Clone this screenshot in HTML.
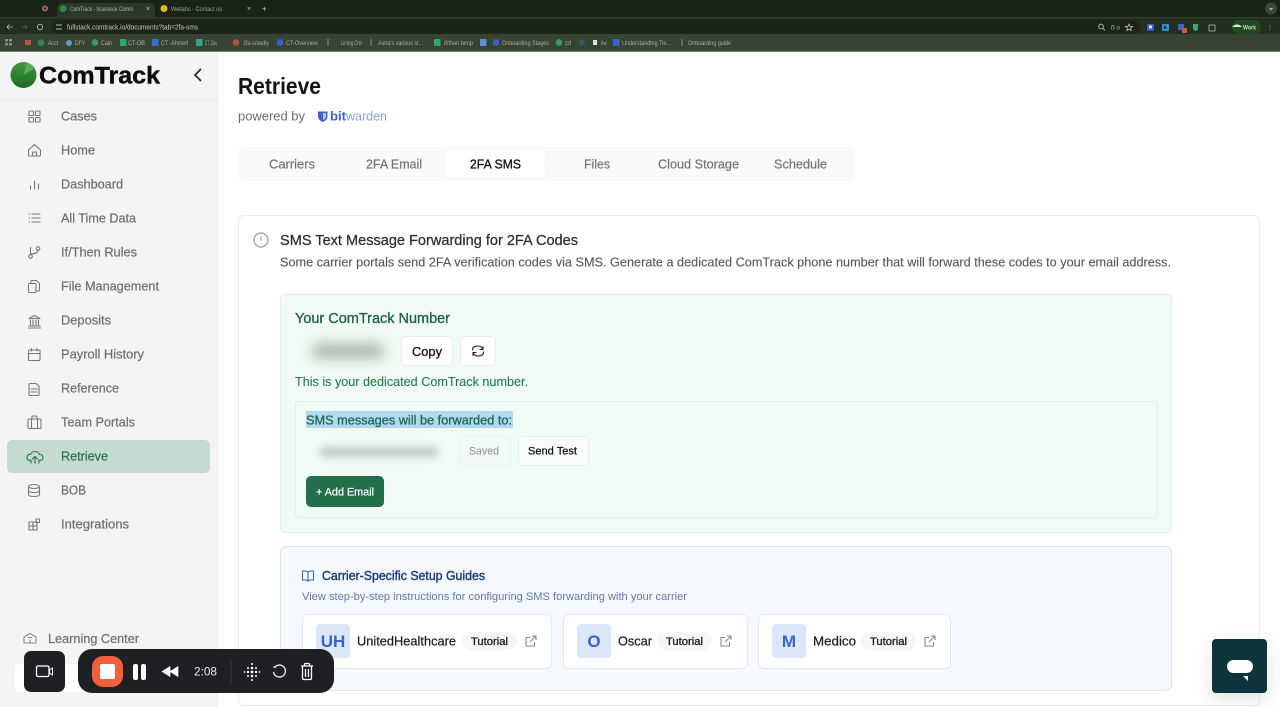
<!DOCTYPE html>
<html lang="en"><head><meta charset="utf-8"><title>ComTrack - Retrieve</title>
<style>
html,body{margin:0;padding:0;width:1280px;height:707px;overflow:hidden;background:#fff;font-family:"Liberation Sans",sans-serif}
.b{position:absolute;box-sizing:border-box}
svg.o{position:absolute;left:0;top:0;width:1280px;height:707px;z-index:1}
svg.soft{filter:blur(.3px)}
svg text{font-family:"Liberation Sans",sans-serif}
.btn{background:#fff;border:1px solid #e8edea;border-radius:5px}
.card{background:#fff;border:1px solid #dfe8f3;border-radius:6px;top:614px;height:55px}
.av{background:#dbe7f9;border-radius:4px;top:624px;width:34px;height:34px}
.pill{background:#f6f6f6;border-radius:9px;top:632px;width:55px;height:18px}
</style></head><body>
<!-- browser chrome -->
<div class="b" style="left:0;top:0;width:1280px;height:17px;background:#192416"></div>
<div class="b" style="left:57px;top:3px;width:98px;height:15px;background:#2b3a27;border-radius:5px 5px 0 0"></div>
<div class="b" style="left:0;top:17px;width:1280px;height:18px;background:#222e1e;border-top:1px solid #33422e"></div>
<div class="b" style="left:52px;top:20px;width:1088px;height:14px;background:#1a2417;border-radius:7px"></div>
<div class="b" style="left:0;top:34px;width:1280px;height:17px;background:#374433"></div>
<div class="b" style="left:0;top:51px;width:1280px;height:1px;background:#777d75"></div>
<div class="b" style="left:1232px;top:20px;width:29px;height:14px;background:#1f4a24;border-radius:7px"></div>
<!-- sidebar -->
<div class="b" style="left:0;top:52px;width:218px;height:655px;background:#f4f4f5;border-right:1px solid #e9e9e9"></div>
<div class="b" style="left:0;top:99px;width:217px;height:1px;background:#ebebeb"></div>
<div class="b" style="left:7px;top:440px;width:203px;height:33px;background:#c5dad0;border-radius:5px"></div>
<div class="b" style="left:15px;top:664px;width:120px;height:28px;background:#fff;border-radius:4px"></div>
<!-- tabs -->
<div class="b" style="left:238px;top:147px;width:617px;height:34px;background:#fafafa;border-radius:5px"></div>
<div class="b" style="left:445px;top:150px;width:100px;height:28px;background:#fff;border-radius:4px;box-shadow:0 1px 2px rgba(0,0,0,.04)"></div>
<!-- card -->
<div class="b" style="left:238px;top:215px;width:1022px;height:491px;border:1px solid #ececec;border-radius:6px"></div>
<div class="b" style="left:280px;top:294px;width:892px;height:239px;background:#effbf4;border:1px solid #d9f2e4;border-radius:5px"></div>
<div class="b" style="left:312px;top:345px;width:72px;height:12px;background:#98a69d;filter:blur(7px);border-radius:6px"></div>
<div class="b btn" style="left:401px;top:336px;width:52px;height:30px"></div>
<div class="b btn" style="left:460px;top:336px;width:36px;height:30px"></div>
<div class="b" style="left:295px;top:401px;width:863px;height:117px;border:1px solid #d9f2e4;border-radius:4px"></div>
<div class="b" style="left:306px;top:411px;width:207px;height:17px;background:#b2d8f2"></div>
<div class="b" style="left:319px;top:447px;width:120px;height:10px;background:#c2cac5;filter:blur(4px);border-radius:5px"></div>
<div class="b" style="left:459px;top:436px;width:52px;height:30px;background:#f1f9f4;border:1px solid #e8f0eb;border-radius:5px"></div>
<div class="b btn" style="left:518px;top:436px;width:71px;height:30px;background:#f8fcfa"></div>
<div class="b" style="left:306px;top:476px;width:78px;height:31px;background:#22704a;border-radius:5px"></div>
<!-- guides -->
<div class="b" style="left:280px;top:546px;width:892px;height:145px;background:#f5f9fe;border:1px solid #dbe5f1;border-radius:6px"></div>
<div class="b card" style="left:302px;width:250px"></div>
<div class="b card" style="left:563px;width:185px"></div>
<div class="b card" style="left:758px;width:193px"></div>
<div class="b av" style="left:316px"></div><div class="b av" style="left:577px"></div><div class="b av" style="left:772px"></div>
<div class="b pill" style="left:462px"></div><div class="b pill" style="left:657px"></div><div class="b pill" style="left:861px"></div>

<svg class="o soft" viewBox="0 0 1280 707" xmlns="http://www.w3.org/2000/svg">
<defs><linearGradient id="g" x1="0" y1="0" x2="0" y2="1"><stop offset="0" stop-color="#3f9a3f"/><stop offset="1" stop-color="#1c6b24"/></linearGradient></defs>
<!-- chrome content -->
<g style="filter:blur(.35px)">
<circle cx="45" cy="8.500" r="3" fill="#a86b5f"/><circle cx="45" cy="8.500" r="1.300" fill="#3a2a25"/>
<circle cx="63" cy="8.500" r="3.500" fill="#2f8a4a"/>
<text x="70" y="11" font-size="6.500" fill="#aeb8a8" textLength="63" lengthAdjust="spacingAndGlyphs">ComTrack - Insurance Comm</text>
<text x="146" y="11" font-size="7" fill="#c4cbc0">×</text>
<circle cx="164" cy="8.500" r="3.500" fill="#e0b92c"/>
<text x="171" y="11" font-size="6.500" fill="#9aa595" textLength="51" lengthAdjust="spacingAndGlyphs">Wellabs - Contact us</text>
<text x="247" y="11" font-size="7" fill="#c4cbc0">×</text>
<text x="262" y="11.500" font-size="8" fill="#c4cbc0">+</text>
<circle cx="1271" cy="8.500" r="6" fill="#3a4a38"/><path d="M1269.500 8l1.500 1.500 1.500-1.500" stroke="#ccd" fill="none"/>
<path d="M7 27h6M7 27l2.500-2.500M7 27l2.500 2.500" stroke="#b5bdb0" fill="none" stroke-width=".8"/>
<path d="M22 27h5M27 27l-2-2M27 27l-2 2" stroke="#5f6b5a" fill="none" stroke-width=".8"/>
<circle cx="40" cy="27" r="2.700" stroke="#b5bdb0" fill="none" stroke-width=".8"/>
<path d="M56 25h6M56 29h6" stroke="#b5bdb0" stroke-width=".9"/>
<text x="67" y="29.500" font-size="7" fill="#c3cbbd" textLength="131" lengthAdjust="spacingAndGlyphs">fullstack.comtrack.io/documents?tab=2fa-sms</text>
<circle cx="1101" cy="26.500" r="2.400" stroke="#a8b0a4" fill="none"/><path d="M1103 28.500l2 2" stroke="#a8b0a4"/>
<text x="1111" y="29.500" font-size="6.500" fill="#a8b0a4" textLength="9">ßo</text>
<path d="M1129 24l1 2.300 2.500.2-1.900 1.600.6 2.400-2.200-1.300-2.200 1.300.6-2.400-1.900-1.600 2.500-.2z" stroke="#c3cbbd" fill="none" stroke-width=".8"/>
<rect x="1147" y="24" width="7" height="7" rx="1" fill="#3a5fc0"/><rect x="1149" y="25.500" width="3" height="3" fill="#dde"/>
<rect x="1162" y="24" width="7" height="7" rx="1" fill="#2f8fd6"/><path d="M1164 25.500l3 2-3 2z" fill="#123"/>
<rect x="1178" y="24" width="6" height="6" rx="1" fill="#4068c8"/><rect x="1182" y="28" width="5" height="5" rx="1" fill="#d85a30"/>
<path d="M1193 24h5v4q0 2-2.500 3q-2.500-1-2.500-3z" fill="#3fa577"/>
<rect x="1209" y="25" width="6" height="6" stroke="#b5bdb0" fill="none" stroke-width=".8"/>
<path d="M1232 27q5-5 10 0z" fill="#dfe3dc"/>
<text x="1243" y="29.500" font-size="6" fill="#c5d4bf" font-weight="bold" textLength="13" lengthAdjust="spacingAndGlyphs">Work</text>
<path d="M1270 25v.6M1270 27v.6M1270 29v.6" stroke="#c3cbbd" stroke-width="1"/>
<g fill="#8a9486"><rect x="5" y="39" width="3" height="2.500"/><rect x="9" y="39" width="3" height="2.500"/><rect x="5" y="43" width="3" height="2.500"/><rect x="9" y="43" width="3" height="2.500"/></g>
<rect x="25" y="40" width="6" height="5" fill="#b8564a"/>
<circle cx="41" cy="42.500" r="3.300" fill="#2f8a4a"/><circle cx="69" cy="43" r="3" fill="#5b9bd0"/><circle cx="95" cy="42.500" r="3.300" fill="#3e9a5a"/>
<rect x="120" y="39" width="6.500" height="7" fill="#2fa866"/><rect x="152" y="39" width="6.500" height="7" fill="#3a6fd0"/><rect x="196" y="39" width="6.500" height="7" fill="#35a090"/>
<circle cx="236" cy="42.500" r="3.300" fill="#a5563f"/><circle cx="280" cy="42.500" r="3.300" fill="#3b62c8"/>
<path d="M328 39v7" stroke="#5e8a4a" stroke-width="1.500"/><path d="M371 39v7" stroke="#5e8a4a" stroke-width="1.500"/>
<rect x="434" y="39" width="6.500" height="7" fill="#2fa866"/><rect x="480" y="39" width="6.500" height="7" fill="#5b8fd8"/>
<circle cx="496" cy="42.500" r="3.300" fill="#3b62c8"/><circle cx="559" cy="42.500" r="3.300" fill="#3b9a58"/><circle cx="582" cy="42.500" r="3" fill="#33566e"/>
<rect x="593" y="40" width="4" height="5" fill="#dfe3dc"/><rect x="613" y="39" width="6.500" height="7" fill="#3b62c8"/>
<path d="M682 39v7" stroke="#5e8a4a" stroke-width="1.500"/>
<g font-size="6" fill="#a8b0a2">
<text x="48" y="45" textLength="10" lengthAdjust="spacingAndGlyphs">Acct</text>
<text x="75" y="45" textLength="10" lengthAdjust="spacingAndGlyphs">DFY</text>
<text x="101" y="45" textLength="11" lengthAdjust="spacingAndGlyphs">Caln</text>
<text x="128" y="45" textLength="17" lengthAdjust="spacingAndGlyphs">CT-OB</text>
<text x="161" y="45" textLength="27" lengthAdjust="spacingAndGlyphs">CT -Ahmed</text>
<text x="205" y="45" textLength="12" lengthAdjust="spacingAndGlyphs">CT .Zaru</text>
<text x="243" y="45" textLength="26" lengthAdjust="spacingAndGlyphs">2fa-smedly</text>
<text x="286" y="45" textLength="32" lengthAdjust="spacingAndGlyphs">CT-Overview</text>
<text x="341" y="45" textLength="21" lengthAdjust="spacingAndGlyphs">Liming Cntr</text>
<text x="378" y="45" textLength="45" lengthAdjust="spacingAndGlyphs">Astra's various st...</text>
<text x="444" y="45" textLength="29" lengthAdjust="spacingAndGlyphs">if/then temp</text>
<text x="502" y="45" textLength="47" lengthAdjust="spacingAndGlyphs">Onboarding Stages</text>
<text x="565" y="45" textLength="6" lengthAdjust="spacingAndGlyphs">zd</text>
<text x="601" y="45" textLength="6" lengthAdjust="spacingAndGlyphs">iv</text>
<text x="622" y="45" textLength="49" lengthAdjust="spacingAndGlyphs">Understanding Tie...</text>
<text x="688" y="45" textLength="43" lengthAdjust="spacingAndGlyphs">Onboarding guide</text>
</g></g>
<!-- logo -->
<circle cx="23.500" cy="75" r="13" fill="url(#g)"/><path d="M23.500 75L35 68A13 13 0 0 0 27 62.500z" fill="#6fb36a" opacity=".7"/>
<text x="39" y="83.500" font-size="24" font-weight="bold" fill="#0c0c0c" stroke="#0c0c0c" stroke-width=".4" textLength="121" lengthAdjust="spacingAndGlyphs">ComTrack</text>
<path d="M201 69l-6 6 6 6" stroke="#222" stroke-width="1.600" fill="none"/>
<!-- nav text -->
<g font-size="13" fill="#6f6f6f" stroke="#6f6f6f" stroke-width=".22">
<text x="61" y="120.500" textLength="36" lengthAdjust="spacingAndGlyphs">Cases</text>
<text x="61" y="154.500" textLength="34" lengthAdjust="spacingAndGlyphs">Home</text>
<text x="61" y="188.500" textLength="62" lengthAdjust="spacingAndGlyphs">Dashboard</text>
<text x="61" y="222.500" textLength="75" lengthAdjust="spacingAndGlyphs">All Time Data</text>
<text x="61" y="256.500" textLength="76" lengthAdjust="spacingAndGlyphs">If/Then Rules</text>
<text x="61" y="290.500" textLength="98" lengthAdjust="spacingAndGlyphs">File Management</text>
<text x="61" y="324.500" textLength="50" lengthAdjust="spacingAndGlyphs">Deposits</text>
<text x="61" y="358.500" textLength="83" lengthAdjust="spacingAndGlyphs">Payroll History</text>
<text x="61" y="392.500" textLength="58" lengthAdjust="spacingAndGlyphs">Reference</text>
<text x="61" y="426.500" textLength="74" lengthAdjust="spacingAndGlyphs">Team Portals</text>
<text x="61" y="460.500" textLength="47" lengthAdjust="spacingAndGlyphs" fill="#2a7050" stroke="#2a7050">Retrieve</text>
<text x="61" y="494.500" textLength="25" lengthAdjust="spacingAndGlyphs">BOB</text>
<text x="61" y="528.500" textLength="68" lengthAdjust="spacingAndGlyphs">Integrations</text>
<text x="48" y="643" textLength="91" lengthAdjust="spacingAndGlyphs">Learning Center</text>
</g>
<!-- nav icons -->
<g stroke="#777" stroke-width="1.100" fill="none" stroke-linecap="round" stroke-linejoin="round">
<rect x="29" y="111" width="4.500" height="4.500" rx=".8"/><rect x="35.500" y="111" width="4.500" height="4.500" rx=".8"/><rect x="29" y="117.500" width="4.500" height="4.500" rx=".8"/><rect x="35.500" y="117.500" width="4.500" height="4.500" rx=".8"/>
<path d="M28.500 150l6-5.500 6 5.500v5q0 1-1 1h-10q-1 0-1-1z"/><path d="M32.500 156v-4h4v4"/>
<path d="M30.500 189v-3M34.500 189v-8M38.500 189v-5"/>
<path d="M32 214h8M32 218h8M32 222h8M29 214h.5M29 218h.5M29 222h.5"/>
<circle cx="30.500" cy="256.500" r="1.800"/><circle cx="38" cy="248.500" r="1.800"/><path d="M30.500 254.500v-7M30.500 254q7 0 7.500-4"/>
<rect x="28.500" y="283.500" width="7.500" height="9" rx="1.200"/><path d="M31 283v-1.500q0-1 1-1h4.500l3 3v6.500q0 1-1 1h-2"/>
<path d="M29 318.500l5.500-3 5.500 3zM30.500 320v5M33 320v5M36 320v5M38.500 320v5M29 326h11M28.500 328h12"/>
<rect x="28.500" y="350" width="11.500" height="10.500" rx="1"/><path d="M28.500 353.500h11.500M31.500 348.500v2.500M37 348.500v2.500"/>
<path d="M30 383.500h6l3 3v8q0 1-1 1h-8q-1 0-1-1v-10q0-1 1-1zM31 389h6M31 392h6"/>
<rect x="28" y="419" width="13" height="9.500" rx="1"/><path d="M31.500 428.500v-9.500M37.500 428.500v-9.500M32 419v-2q0-1 1-1h3q1 0 1 1v2"/>
<g stroke="#2a7050"><path d="M30 460.500q-3.500-.5-3-3.500t3.500-2.500q1-3 4.500-3t4.500 3q3.500 0 3.500 3t-3 3"/><path d="M35 463v-6M32.500 459l2.500-2.500 2.500 2.500M31 463v-3M39 463v-3"/></g>
<ellipse cx="34" cy="486.500" rx="5.500" ry="2"/><path d="M28.500 486.500v8q0 2 5.500 2t5.500-2v-8M28.500 490.500q0 2 5.500 2t5.500-2"/>
<rect x="29" y="522" width="4" height="4"/><rect x="29" y="526" width="4" height="4"/><rect x="33" y="526" width="4" height="4"/><rect x="33" y="522" width="4" height="4"/><rect x="36" y="519" width="3.500" height="3.500"/>
<path d="M24 643v-6l6-3.500 6 3.500v6zM30 643v-3M28 637.500h4" stroke="#888"/>
</g>
<!-- header -->
<text x="238" y="94" font-size="23" font-weight="bold" fill="#141414" textLength="83" lengthAdjust="spacingAndGlyphs">Retrieve</text>
<text x="238" y="120.500" font-size="13" fill="#6d6d6d" textLength="67" lengthAdjust="spacingAndGlyphs">powered by</text>
<path d="M318 111.500h9.500v5q0 3.500-4.750 5.500q-4.750-2-4.750-5.500z" fill="#3b62c4"/><path d="M323 113v7q3-1.500 3-4v-3z" fill="#b8c8ec"/>
<text x="330" y="120.500" font-size="13" font-weight="bold" fill="#3b62c4" textLength="16" lengthAdjust="spacingAndGlyphs">bit</text>
<text x="346" y="120.500" font-size="13" fill="#8ba3d8" textLength="41" lengthAdjust="spacingAndGlyphs">warden</text>
<!-- tabs text -->
<g font-size="13" fill="#737373" stroke="#737373" stroke-width=".2">
<text x="269" y="168.500" textLength="46" lengthAdjust="spacingAndGlyphs">Carriers</text>
<text x="366" y="168.500" textLength="56" lengthAdjust="spacingAndGlyphs">2FA Email</text>
<text x="470" y="168.500" textLength="51" lengthAdjust="spacingAndGlyphs" fill="#111" stroke="#111" stroke-width=".3">2FA SMS</text>
<text x="584" y="168.500" textLength="26" lengthAdjust="spacingAndGlyphs">Files</text>
<text x="658" y="168.500" textLength="81" lengthAdjust="spacingAndGlyphs">Cloud Storage</text>
<text x="774" y="168.500" textLength="53" lengthAdjust="spacingAndGlyphs">Schedule</text>
</g>
<!-- card head -->
<circle cx="261" cy="240" r="7" stroke="#999" stroke-width="1.200" fill="none"/><path d="M261 236.500v4M261 243v.6" stroke="#999" stroke-width="1.200"/>
<text x="280" y="245" font-size="14.500" fill="#2e2e2e" stroke="#2e2e2e" stroke-width=".25" textLength="298" lengthAdjust="spacingAndGlyphs">SMS Text Message Forwarding for 2FA Codes</text>
<text x="280" y="266.500" font-size="13" fill="#555" stroke="#555" stroke-width=".1" textLength="891" lengthAdjust="spacingAndGlyphs">Some carrier portals send 2FA verification codes via SMS. Generate a dedicated ComTrack phone number that will forward these codes to your email address.</text>
<!-- green -->
<text x="295" y="323" font-size="14.500" fill="#1e5e3f" stroke="#1e5e3f" stroke-width=".3" textLength="155" lengthAdjust="spacingAndGlyphs">Your ComTrack Number</text>
<text x="412" y="356" font-size="13" fill="#111" stroke="#111" stroke-width=".3" textLength="30" lengthAdjust="spacingAndGlyphs">Copy</text>
<g stroke="#222" stroke-width="1.100" fill="none" stroke-linecap="round" stroke-linejoin="round"><path d="M472.500 350q0-4 5.500-4q3 0 4.500 2.500M483 349.500v-3M483 349.500h-3"/><path d="M483.500 352q0 4-5.500 4q-3 0-4.500-2.500M473 352.500v3M473 352.500h3"/></g>
<text x="295" y="386" font-size="13" fill="#23794c" stroke="#23794c" stroke-width=".1" textLength="233" lengthAdjust="spacingAndGlyphs">This is your dedicated ComTrack number.</text>
<text x="306" y="424.500" font-size="13" fill="#1e6a55" stroke="#1e6a55" stroke-width=".3" textLength="206" lengthAdjust="spacingAndGlyphs">SMS messages will be forwarded to:</text>
<text x="469" y="454.500" font-size="11" fill="#8a8f8c" textLength="30" lengthAdjust="spacingAndGlyphs">Saved</text>
<text x="528" y="454.500" font-size="11" fill="#111" stroke="#111" stroke-width=".25" textLength="49" lengthAdjust="spacingAndGlyphs">Send Test</text>
<text x="316" y="495.500" font-size="11" fill="#fff" stroke="#fff" stroke-width=".2" textLength="58" lengthAdjust="spacingAndGlyphs">+ Add Email</text>
<!-- blue -->
<path d="M308 572q-2-1.500-5.500-1v9q3.500-.5 5.500 1q2-1.500 5.500-1v-9q-3.500-.5-5.500 1zM308 572v9" stroke="#3b62c4" stroke-width="1.100" fill="none"/>
<text x="322" y="580" font-size="12.500" fill="#1e3a7a" stroke="#1e3a7a" stroke-width=".4" textLength="163" lengthAdjust="spacingAndGlyphs">Carrier-Specific Setup Guides</text>
<text x="302" y="600" font-size="11" fill="#5f78ae" textLength="385" lengthAdjust="spacingAndGlyphs">View step-by-step instructions for configuring SMS forwarding with your carrier</text>
<g font-size="17" font-weight="bold" fill="#3a62c8" text-anchor="middle">
<text x="333" y="647">UH</text><text x="594" y="647">O</text><text x="789" y="647">M</text></g>
<g font-size="13" fill="#1a1a1a" stroke="#1a1a1a" stroke-width=".2">
<text x="357" y="645.500" textLength="99" lengthAdjust="spacingAndGlyphs">UnitedHealthcare</text>
<text x="618" y="645.500" textLength="34" lengthAdjust="spacingAndGlyphs">Oscar</text>
<text x="813" y="645.500" textLength="43" lengthAdjust="spacingAndGlyphs">Medico</text></g>
<g font-size="11" fill="#222" stroke="#222" stroke-width=".35">
<text x="471" y="645" textLength="37" lengthAdjust="spacingAndGlyphs">Tutorial</text>
<text x="666" y="645" textLength="37" lengthAdjust="spacingAndGlyphs">Tutorial</text>
<text x="870" y="645" textLength="37" lengthAdjust="spacingAndGlyphs">Tutorial</text></g>
<g stroke="#888" stroke-width="1.100" fill="none">
<path d="M530 637.500h-4v8.500h8.500v-4M530 642l6-6M532 636h4v4"/>
<path d="M725 637.500h-4v8.500h8.500v-4M725 642l6-6M727 636h4v4"/>
<path d="M929 637.500h-4v8.500h8.500v-4M929 642l6-6M931 636h4v4"/></g>
</svg>

<!-- recorder -->
<div class="b" style="left:24px;top:651px;width:41px;height:41px;background:#1f2024;border-radius:7px;z-index:2"></div>
<div class="b" style="left:78px;top:649px;width:256px;height:44px;background:#1f2024;border-radius:14px;z-index:2"></div>
<div class="b" style="left:92px;top:656px;width:31px;height:31px;background:#f0603a;border-radius:11px;z-index:3"></div>
<div class="b" style="left:100px;top:664px;width:15px;height:15px;background:#fff;border-radius:2px;z-index:3"></div>
<svg class="o" style="z-index:3" viewBox="0 0 1280 707" xmlns="http://www.w3.org/2000/svg">
<rect x="36.500" y="666" width="12.500" height="10.500" rx="1.500" stroke="#fff" stroke-width="1.300" fill="none"/><path d="M49.500 670l3-2v7l-3-2z" stroke="#fff" fill="none"/>
<rect x="133" y="664" width="5" height="16" rx="2" fill="#fff"/><rect x="141" y="664" width="5" height="16" rx="2" fill="#fff"/>
<path d="M162 671.500l8-5v10zM170 671.500l8-5v10z" fill="#fff" stroke="#fff" stroke-width=".6" stroke-linejoin="round"/>
<text x="194" y="675.500" font-size="11.500" fill="#eee" textLength="23" lengthAdjust="spacingAndGlyphs">2:08</text>
<path d="M231 660v24" stroke="#3a3b3f"/>
<g fill="#fff"><circle cx="252" cy="664" r="1"/><circle cx="252" cy="668" r="1.300"/><circle cx="252" cy="672" r="1.400"/><circle cx="252" cy="676" r="1.300"/><circle cx="252" cy="680" r="1"/><circle cx="248" cy="668" r="1"/><circle cx="248" cy="672" r="1.200"/><circle cx="248" cy="676" r="1"/><circle cx="256" cy="668" r="1"/><circle cx="256" cy="672" r="1.200"/><circle cx="256" cy="676" r="1"/><circle cx="244.500" cy="672" r=".9"/><circle cx="259.500" cy="672" r=".9"/></g>
<path d="M275 667a6 6 0 1 1-1.500 5M273.500 666.500l1.500 1 1-1.500" stroke="#eee" stroke-width="1.300" fill="none"/>
<path d="M301 666h12M304.500 666v-1.500q0-1 1-1h3q1 0 1 1v1.500M302.500 666v12q0 1.500 1.500 1.500h6q1.500 0 1.500-1.500v-12M305.500 669v8M308.500 669v8" stroke="#fff" stroke-width="1.300" fill="none"/>
</svg>
<!-- chat -->
<div class="b" style="left:1212px;top:639px;width:55px;height:54px;background:#0d343a;border-radius:4px;z-index:2;box-shadow:0 6px 18px rgba(0,0,0,.12)"></div>
<div class="b" style="left:1227px;top:660px;width:26px;height:13px;background:#fff;border-radius:6.500px;z-index:3"></div>
<svg class="b" style="left:1243px;top:676px;z-index:3" width="6" height="6"><path d="M0 0h5v5z" fill="#fff"/></svg>
</body></html>
